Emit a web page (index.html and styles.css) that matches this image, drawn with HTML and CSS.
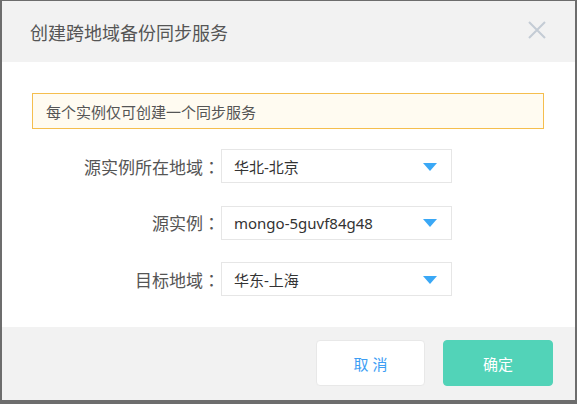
FILE: index.html
```html
<!DOCTYPE html>
<html lang="zh-CN">
<head>
<meta charset="utf-8">
<link rel="stylesheet" href="styles.css">
</head>
<body>
<div class="dialog">
  <div class="dialog-header">
    <h1 class="dialog-title">创建跨地域备份同步服务</h1>
    <button class="close-btn" aria-label="关闭">
      <svg width="18" height="18" viewBox="0 0 18 18"><path d="M1 1 L17 17 M17 1 L1 17" stroke="#c4ccd5" stroke-width="2" fill="none"/></svg>
    </button>
  </div>
  <div class="dialog-body">
    <div class="alert">每个实例仅可创建一个同步服务</div>
    <div class="form">
      <label class="form-label">源实例所在地域<span class="colon" lang="zh-TW">：</span></label>
      <div class="select"><span class="select-text">华北-北京</span><span class="caret"></span></div>
      <label class="form-label">源实例<span class="colon" lang="zh-TW">：</span></label>
      <div class="select"><span class="select-text">mongo-5guvf84g48</span><span class="caret"></span></div>
      <label class="form-label">目标地域<span class="colon" lang="zh-TW">：</span></label>
      <div class="select"><span class="select-text">华东-上海</span><span class="caret"></span></div>
    </div>
  </div>
  <div class="dialog-footer">
    <button class="btn btn-cancel">取 消</button>
    <button class="btn btn-ok">确定</button>
  </div>
</div>
</body>
</html>
```

FILE: styles.css
```css
* { box-sizing: border-box; }
html, body {
  margin: 0;
  padding: 0;
  background: #6d6d6d;
  width: 577px;
  height: 404px;
  overflow: hidden;
}
body {
  font-family: "Noto Sans", "Noto Sans CJK SC", sans-serif;
  padding: 1px 2px 4px 2px;
}
.dialog {
  width: 573px;
  height: 399px;
  background: #fff;
  display: flex;
  flex-direction: column;
}
.dialog-header {
  height: 61px;
  background: #f2f2f2;
  display: flex;
  align-items: center;
  justify-content: space-between;
  padding: 2px 29px 0 28px;
}
.dialog-title {
  margin: 0;
  font-size: 18px;
  font-weight: normal;
  color: #555;
  line-height: 24px;
}
.close-btn {
  border: 0;
  background: none;
  padding: 0;
  width: 18px;
  height: 18px;
  margin-top: -5px;
  display: flex;
}
.dialog-body {
  height: 265px;
  padding: 31px 31px 0 30px;
}
.alert {
  height: 36px;
  border: 1px solid #f5be4e;
  background: #fffbf1;
  color: #555;
  font-size: 15px;
  display: flex;
  align-items: center;
  padding-left: 13px;
}
.form {
  margin-top: 20px;
  display: grid;
  grid-template-columns: 188px 231px;
  column-gap: 1px;
  row-gap: 22.5px;
  align-items: center;
}
.form-label {
  text-align: right;
  font-size: 17px;
  color: #555;
  white-space: nowrap;
}
.colon {
  font-family: "Noto Sans CJK TC", sans-serif;
}
.select {
  height: 34px;
  border: 1px solid #e6e6e6;
  background: #fff;
  display: flex;
  align-items: center;
  justify-content: space-between;
  padding: 0 14px 0 12px;
}
.select-text {
  font-size: 15px;
  color: #333;
}
.caret {
  width: 0;
  height: 0;
  border-left: 7px solid transparent;
  border-right: 7px solid transparent;
  border-top: 8px solid #3aa8f6;
  margin-top: 1px;
}
.dialog-footer {
  flex: 1;
  background: #f2f2f2;
  display: flex;
  justify-content: flex-end;
  align-items: flex-start;
  gap: 18px;
  padding: 13px 22px 0 0;
}
.btn {
  width: 109px;
  height: 46px;
  border-radius: 4px;
  font-family: "Noto Sans", "Noto Sans CJK SC", sans-serif;
  font-size: 15px;
  cursor: pointer;
}
.btn-cancel {
  background: #fff;
  border: 1px solid #e8e8e8;
  color: #3c9ef4;
}
.btn-ok {
  width: 110px;
  background: #52d3b8;
  border: 1px solid #52d3b8;
  color: #fff;
}
```
